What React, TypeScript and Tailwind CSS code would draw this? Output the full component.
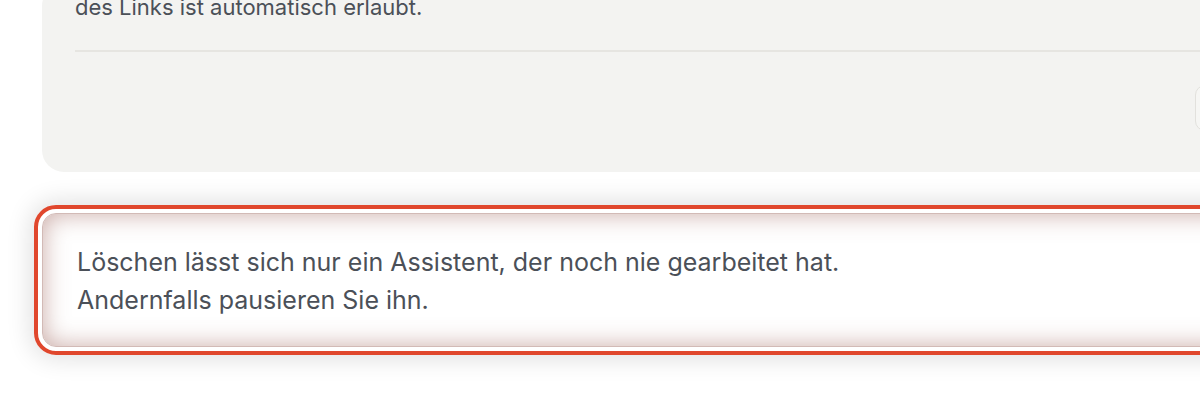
import React from 'react';

export default function App() {
  return (
    <div className="w-[1200px] h-[400px] overflow-hidden bg-white" style={{ fontFamily: 'Inter, "Noto Sans", sans-serif' }}>
      <div className="pl-[42px] -mt-[16px]">
        <div className="w-[1300px] rounded-[22px] bg-[#f3f3f1] pt-[4px]">
          <div className="px-[33px]">
            <p className="text-[22px] leading-[38px] text-[#4b5058]">
              des Links ist automatisch erlaubt.
            </p>
          </div>
          <div className="ml-[33px] mt-[24px] border-t-2 border-[#e6e5e1]" />
          <div className="flex h-[120px] items-start px-[33px]">
            <div className="ml-[1120px] mt-[33px] h-[46px] w-[90px] rounded-[10px] border border-[#e2e1dd] bg-[#f6f6f4]" />
          </div>
        </div>
      </div>

      <div className="pl-[42px] pt-[41px]">
        <div className="w-[1300px] rounded-[14px] bg-white outline-4 outline-offset-4 outline-[#e0472d] shadow-[0_0_0_8px_#fff,0_0_24px_12px_rgba(0,0,0,0.12)]">
          <div className="rounded-[14px] border border-[#d2bab6] px-[34px] pt-[29px] pb-[27px] shadow-[inset_0_0_24px_rgba(150,85,75,0.5)]">
            <p className="text-[25px] leading-[38px] text-[#4b5058]">
              Löschen lässt sich nur ein Assistent, der noch nie gearbeitet hat.
              <br />
              Andernfalls pausieren Sie ihn.
            </p>
          </div>
        </div>
      </div>
    </div>
  );
}
